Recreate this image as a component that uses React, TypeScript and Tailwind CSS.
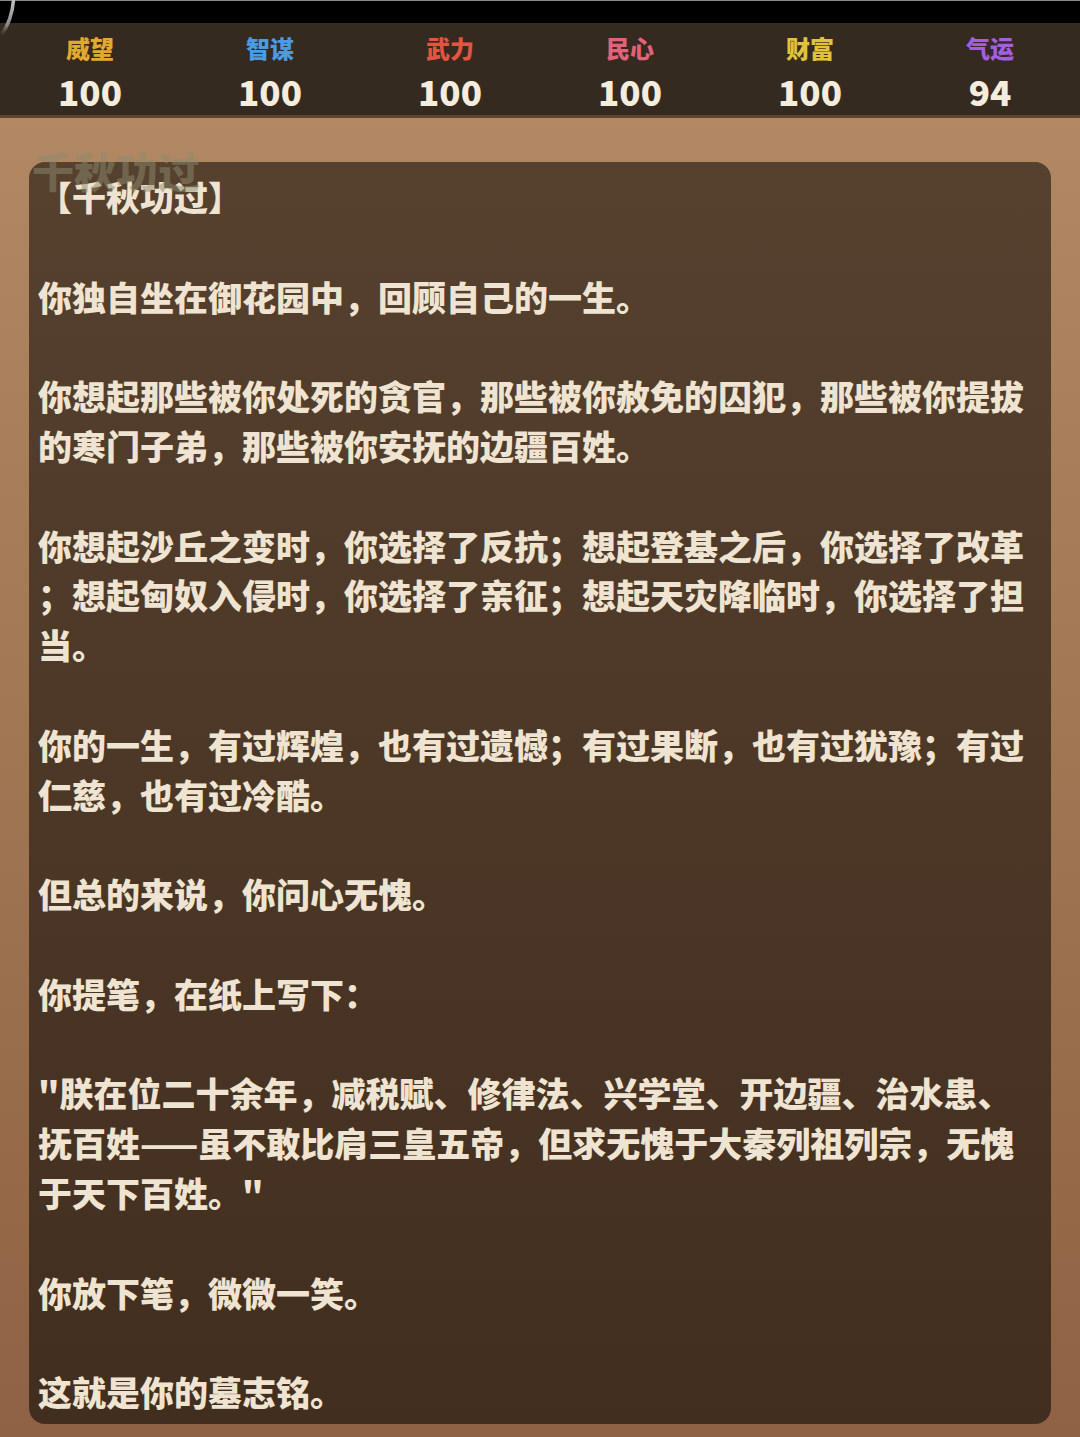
import React from "react";

const stats = [
  { label: "威望", value: "100", color: "text-[#e3a92f]" },
  { label: "智谋", value: "100", color: "text-[#4c9be0]" },
  { label: "武力", value: "100", color: "text-[#e2553f]" },
  { label: "民心", value: "100", color: "text-[#e2627c]" },
  { label: "财富", value: "100", color: "text-[#e3c23a]" },
  { label: "气运", value: "94", color: "text-[#a35fe0]" },
];

const paragraphs = [
  "【千秋功过】",
  "你独自坐在御花园中，回顾自己的一生。",
  "你想起那些被你处死的贪官，那些被你赦免的囚犯，那些被你提拔的寒门子弟，那些被你安抚的边疆百姓。",
  "你想起沙丘之变时，你选择了反抗；想起登基之后，你选择了改革；想起匈奴入侵时，你选择了亲征；想起天灾降临时，你选择了担当。",
  "你的一生，有过辉煌，也有过遗憾；有过果断，也有过犹豫；有过仁慈，也有过冷酷。",
  "但总的来说，你问心无愧。",
  "你提笔，在纸上写下：",
  "\"朕在位二十余年，减税赋、修律法、兴学堂、开边疆、治水患、抚百姓——虽不敢比肩三皇五帝，但求无愧于大秦列祖列宗，无愧于天下百姓。\"",
  "你放下笔，微微一笑。",
  "这就是你的墓志铭。",
];

const font = "font-['Noto_Sans_CJK_SC','Noto_Sans',sans-serif]";

export default function App() {
  return (
    <div className={`relative w-[1080px] h-[1437px] overflow-hidden bg-gradient-to-b from-[#b48c66] to-[#8e6242] ${font}`}>
      {/* top black bar */}
      <div className="h-[23px] bg-black border-t border-[#8a8a8a]" />
      <svg className="absolute left-0 top-0" width="24" height="44" viewBox="0 0 24 44">
        <defs>
          <linearGradient id="arcg" x1="0" y1="0" x2="0" y2="1">
            <stop offset="0" stopColor="#c0c0c0" />
            <stop offset="0.7" stopColor="#8a8a8a" />
            <stop offset="1" stopColor="#5a5248" stopOpacity="0" />
          </linearGradient>
        </defs>
        <path d="M13.5 0 A74 74 0 0 1 1 36" fill="none" stroke="url(#arcg)" strokeWidth="3.5" />
      </svg>
      {/* stats bar */}
      <div className="grid grid-cols-6 h-[95px] bg-[#352a1f] border-b-[3px] border-[#634428] pt-[10px]">
        {stats.map((s) => (
          <div key={s.label} className="flex flex-col items-center">
            <div className={`text-[24px] leading-[30px] font-black ${s.color}`}>{s.label}</div>
            <div className="mt-[8px] text-[35px] leading-[40px] font-black text-[#f4eddd]">{s.value}</div>
          </div>
        ))}
      </div>
      {/* content */}
      <div className="relative px-[29px] pt-[44px]">
        <div className="absolute left-[32px] top-[27px] z-10 text-[42px] leading-[50px] font-black text-[#8c8a6e]/50 pointer-events-none">
          千秋功过
        </div>
        <div className="h-[1262px] overflow-hidden rounded-[16px] bg-gradient-to-b from-[#56412f] to-[#422e1f] pl-[9px] pr-[20px] pt-[10px]">
          <div className="text-[34px] leading-[49.8px] font-black text-[#efe4d1] [line-break:anywhere]">
            {paragraphs.map((p, i) => (
              <p key={i} className="mb-[49.8px]">
                {p}
              </p>
            ))}
          </div>
        </div>
      </div>
    </div>
  );
}
